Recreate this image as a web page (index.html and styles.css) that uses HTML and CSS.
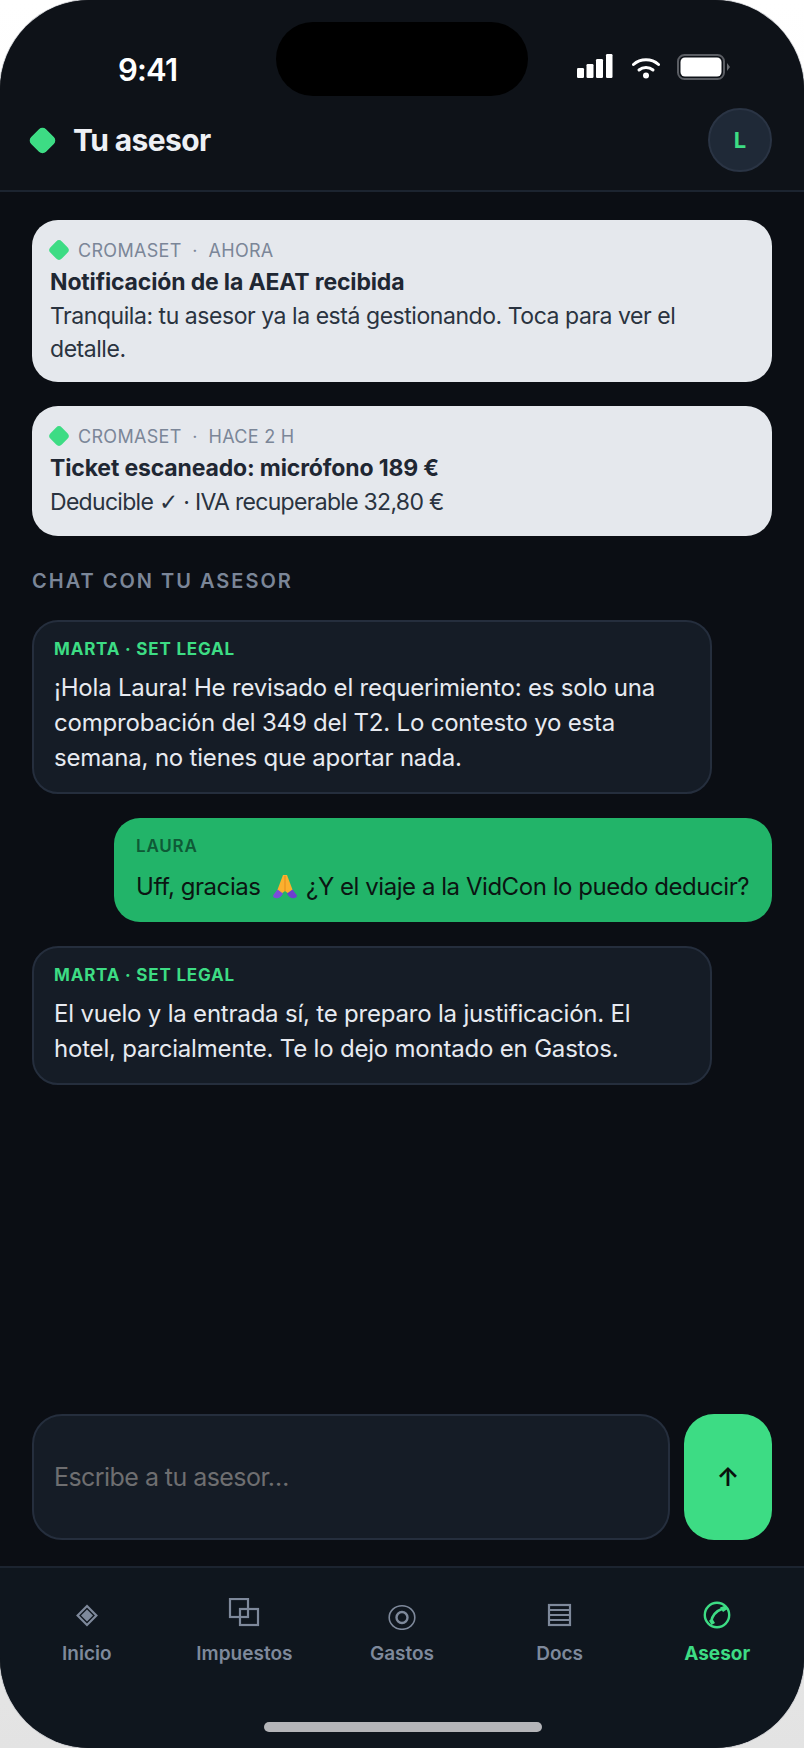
FILE: index.html
```html
<!DOCTYPE html>
<html lang="es">
<head>
<meta charset="utf-8">
<title>Tu asesor</title>
<link rel="stylesheet" href="styles.css">
</head>
<body>
<div class="phone">
  <div class="notch"></div>
  <div class="statusbar">
    <span class="time">9:41</span>
    <div class="status-icons">
      <svg class="i-signal" width="36" height="24" viewBox="0 0 36 24"><rect x="0" y="14" width="7" height="10" rx="1.2"/><rect x="9.5" y="10" width="7" height="14" rx="1.2"/><rect x="19" y="5" width="7" height="19" rx="1.2"/><rect x="29" y="0" width="6.5" height="24" rx="1.2"/></svg>
      <svg class="i-wifi" width="28" height="22" viewBox="0 0 28 22"><path d="M1.5 7.5C8.5 1.2 19.5 1.2 26.5 7.5" fill="none" stroke="#fff" stroke-width="3" stroke-linecap="round"/><path d="M7 13C11 9.6 17 9.6 21 13" fill="none" stroke="#fff" stroke-width="3" stroke-linecap="round"/><circle cx="14" cy="18.5" r="3"/></svg>
      <svg class="i-batt" width="54" height="26" viewBox="0 0 54 26"><rect x="1" y="1" width="46" height="24" rx="6.5" fill="none" stroke="#5a5d63" stroke-width="2"/><rect x="3.5" y="3.5" width="41" height="19" rx="4.5" fill="#fff"/><path d="M50 9l3 4-3 4z" fill="#6a6d72"/></svg>
    </div>
  </div>
  <header class="topbar">
    <div class="brand">
      <span class="gem gem-lg"></span>
      <h1 class="title">Tu asesor</h1>
    </div>
    <div class="avatar">L</div>
  </header>
  <main class="feed">
    <article class="notif">
      <div class="notif-head"><span class="gem gem-sm"></span><span>CROMASET&nbsp; · &nbsp;AHORA</span></div>
      <div class="notif-title">Notificación de la AEAT recibida</div>
      <div class="notif-body">Tranquila: tu asesor ya la está gestionando. Toca para ver el detalle.</div>
    </article>
    <article class="notif">
      <div class="notif-head"><span class="gem gem-sm"></span><span>CROMASET&nbsp; · &nbsp;HACE 2 H</span></div>
      <div class="notif-title">Ticket escaneado: micrófono 189 €</div>
      <div class="notif-body notif-body-tight">Deducible <span class="check">✓</span> · IVA recuperable 32,80 €</div>
    </article>
    <div class="section-label">CHAT CON TU ASESOR</div>
    <div class="msg msg-in">
      <div class="msg-from">MARTA · SET LEGAL</div>
      <div class="msg-text">¡Hola Laura! He revisado el requerimiento: es solo una comprobación del 349 del T2. Lo contesto yo esta semana, no tienes que aportar nada.</div>
    </div>
    <div class="msg msg-out">
      <div class="msg-from">LAURA</div>
      <div class="msg-text">Uff, gracias <svg class="emoji" width="26" height="25" viewBox="0 0 26 25"><path d="M13 1h-2L8 9 5 17l4 3 4-3 4 3 4-3-3-8-3-8z" fill="#fbb02e"/><path d="M13 2v15" stroke="#e58a1c" stroke-width="1"/><path d="M5.500 15.500L1 21.500c0 2.500 3 3.300 5.500 2.500 2-.8 4-3 4.500-4.500z" fill="#7c4ddb"/><path d="M20.500 15.500L25 21.500c0 2.500-3 3.300-5.500 2.500-2-.8-4-3-4.500-4.500z" fill="#6d3fd0"/></svg> ¿Y el viaje a la VidCon lo puedo deducir?</div>
    </div>
    <div class="msg msg-in">
      <div class="msg-from">MARTA · SET LEGAL</div>
      <div class="msg-text">El vuelo y la entrada sí, te preparo la justificación. El hotel, parcialmente. Te lo dejo montado en Gastos.</div>
    </div>
  </main>
  <div class="composer">
    <div class="field">Escribe a tu asesor…</div>
    <div class="send">↑</div>
  </div>
  <nav class="tabbar">
    <div class="tabs">
      <div class="tab">
        <svg class="tab-icon" width="32" height="32" viewBox="0 0 32 32"><path d="M16 8L25.400 17.500 16 27 6.600 17.500z" fill="none" stroke="#7e899b" stroke-width="2.200"/><path d="M16 11.500L22 17.500 16 23.500 10 17.500z" fill="#7e899b"/></svg>
        <span>Inicio</span>
      </div>
      <div class="tab">
        <svg class="tab-icon" width="32" height="32" viewBox="0 0 32 32"><rect x="2" y="1" width="18" height="18" fill="none" stroke="#7e899b" stroke-width="2.200"/><rect x="12" y="11" width="18" height="16" fill="none" stroke="#7e899b" stroke-width="2.200"/></svg>
        <span>Impuestos</span>
      </div>
      <div class="tab">
        <svg class="tab-icon" width="32" height="32" viewBox="0 0 32 32"><ellipse cx="16" cy="19.500" rx="12.800" ry="11.800" fill="none" stroke="#7e899b" stroke-width="1.600"/><circle cx="16" cy="19.500" r="5.500" fill="none" stroke="#7e899b" stroke-width="2.400"/></svg>
        <span>Gastos</span>
      </div>
      <div class="tab">
        <svg class="tab-icon" width="32" height="32" viewBox="0 0 32 32"><rect x="5" y="7" width="21" height="20" fill="none" stroke="#7e899b" stroke-width="2.200"/><path d="M5 12H26M5 17H26M5 22H26" stroke="#7e899b" stroke-width="2.200"/></svg>
        <span>Docs</span>
      </div>
      <div class="tab tab-on">
        <svg class="tab-icon" width="32" height="32" viewBox="0 0 32 32"><circle cx="16" cy="17" r="12.200" fill="none" stroke="#3ddc84" stroke-width="2.400"/><path d="M10 24C11 18 15 13 22 10.500" fill="none" stroke="#3ddc84" stroke-width="2.600"/><path d="M19 9.500L24.500 7.500 26.500 11 22 14zM8 22.500L11.500 21 14 25 10.500 27z" fill="#3ddc84"/></svg>
        <span>Asesor</span>
      </div>
    </div>
    <div class="home-bar"></div>
  </nav>
</div>
</body>
</html>
```
FILE: styles.css
```css
* { box-sizing: border-box; }
html, body { margin: 0; padding: 0; }
body {
  width: 804px;
  height: 1748px;
  background: linear-gradient(180deg, #ffffff 0%, #f2f2f2 60%, #e3e3e3 100%);
  font-family: "Inter", "Liberation Sans", sans-serif;
  overflow: hidden;
}
.phone {
  position: relative;
  width: 804px;
  height: 1748px;
  border-radius: 90px;
  overflow: hidden;
  background: #0b0e14;
  display: flex;
  flex-direction: column;
  box-shadow: 0 0 0 1px #c2c4c8;
}
.notch {
  position: absolute;
  left: 276px;
  top: 22px;
  width: 252px;
  height: 74px;
  border-radius: 37px;
  background: #000;
}
.statusbar {
  height: 90px;
  background: #0e1218;
  padding: 54px 73px 0 118px;
  display: flex;
  justify-content: space-between;
  align-items: flex-start;
  flex: none;
}
.time {
  color: #fff;
  font-size: 31px;
  line-height: 32px;
  font-weight: 600;
  letter-spacing: -0.8px;
}
.status-icons {
  display: flex;
  align-items: flex-start;
  gap: 20px;
}
.status-icons svg { fill: #fff; display: block; }
.i-wifi { margin-left: -1px; margin-top: 3px; }
.i-batt { margin-left: -3px; }
.topbar {
  height: 102px;
  flex: none;
  background: #0e1218;
  border-bottom: 2px solid #1c2430;
  display: flex;
  align-items: center;
  justify-content: space-between;
  padding: 0 32px;
}
.brand { display: flex; align-items: center; gap: 20px; }
.gem {
  display: block;
  background: #3ddc84;
  transform: rotate(45deg);
  flex: none;
}
.gem-lg { width: 21px; height: 21px; border-radius: 5px; }
.gem-sm { width: 16px; height: 16px; border-radius: 4px; margin-left: 1px; }
.title {
  margin: 0;
  color: #eef0f5;
  font-size: 30px;
  font-weight: 700;
  letter-spacing: -0.6px;
}
.avatar {
  width: 64px;
  height: 64px;
  border-radius: 50%;
  background: #1f2937;
  border: 2px solid #2a3444;
  color: #3ddc84;
  font-size: 22px;
  font-weight: 700;
  display: flex;
  align-items: center;
  justify-content: center;
}
.feed {
  flex: 1;
  padding: 28px 32px 0;
  display: flex;
  flex-direction: column;
  gap: 24px;
}
.notif {
  background: #e5e8ed;
  border-radius: 26px;
  padding: 17px 18px 17px;
  color: #1f2937;
}
.notif-head {
  display: flex;
  align-items: center;
  gap: 11px;
  height: 26px;
  margin-bottom: 1px;
  font-size: 18px;
  letter-spacing: 0.3px;
  color: #7b8698;
  white-space: nowrap;
}
.notif-title {
  font-size: 23px;
  font-weight: 700;
  line-height: 36px;
  letter-spacing: -0.15px;
  color: #1f2733;
}
.notif-body {
  font-size: 23px;
  line-height: 32.5px;
  letter-spacing: -0.45px;
  color: #2a3340;
}
.notif-body-tight { letter-spacing: -0.7px; }
.check { font-family: "DejaVu Sans", sans-serif; }
.section-label {
  font-size: 20px;
  line-height: 24px;
  font-weight: 600;
  letter-spacing: 2px;
  color: #7b8698;
  margin-top: 9px;
  margin-bottom: 3.5px;
}
.msg {
  border-radius: 26px;
}
.msg-in {
  width: 680px;
  padding: 16px 20px 17px;
  background: #151c26;
  border: 2px solid #252e3d;
  color: #e7eaf0;
}
.msg-out {
  align-self: flex-end;
  width: 658px;
  background: #22b469;
  color: #0b1512;
  padding: 17px 22px 18px;
  white-space: nowrap;
}
.msg-from {
  font-size: 17px;
  line-height: 22px;
  font-weight: 700;
  letter-spacing: 0.8px;
  margin-bottom: 10px;
}
.msg-in .msg-from { color: #3ddc84; }
.msg-out .msg-from { color: #0e5a36; font-weight: 600; margin-bottom: 12px; }
.msg-text {
  font-size: 24px;
  line-height: 35px;
  letter-spacing: -0.2px;
}
.msg-out .msg-text { letter-spacing: -0.45px; }
.emoji { vertical-align: -4px; margin: 0 2px 0 5px; }
.composer {
  flex: none;
  display: flex;
  gap: 14px;
  padding: 0 32px 26px;
}
.field {
  flex: 1;
  height: 126px;
  background: #151c26;
  border: 2px solid #252e3d;
  border-radius: 30px;
  padding: 0 20px;
  display: flex;
  align-items: center;
  font-size: 25px;
  letter-spacing: -0.55px;
  color: #6e6e70;
}
.send {
  width: 88px;
  height: 126px;
  border-radius: 30px;
  background: #3ddc84;
  color: #08110c;
  display: flex;
  align-items: center;
  justify-content: center;
  font-size: 26px;
  font-weight: 600;
  padding-bottom: 2px;
}
.tabbar {
  flex: none;
  height: 182px;
  background: #0f161e;
  border-top: 2px solid #1c2430;
  display: flex;
  flex-direction: column;
  padding: 30px 8px 16px;
}
.tabs {
  display: grid;
  grid-template-columns: repeat(5, 1fr);
}
.tab {
  display: flex;
  flex-direction: column;
  align-items: center;
  gap: 12px;
  font-size: 19px;
  line-height: 24px;
  font-weight: 600;
  color: #7e899b;
}
.tab-icon { display: block; }
.tab-on { color: #3ddc84; font-weight: 700; }
.home-bar {
  width: 278px;
  height: 10px;
  border-radius: 5px;
  background: #b4b5b9;
  margin: auto 0 0 256px;
}
```
